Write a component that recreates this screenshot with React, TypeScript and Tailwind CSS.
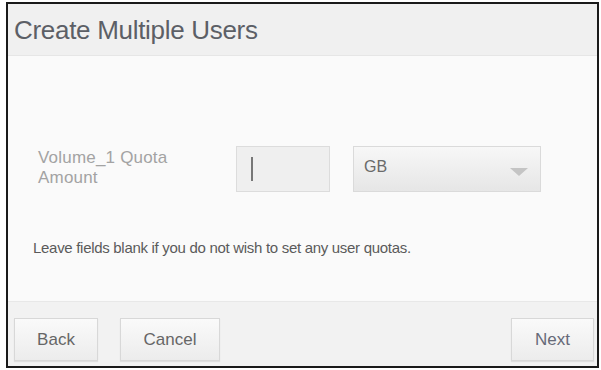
import React from "react";

export default function App() {
  const font = { fontFamily: '"Liberation Sans", Arial, sans-serif' };
  return (
    <div className="w-[601px] h-[370px] bg-white pt-[2px] pl-[6px]" style={font}>
      <div className="w-[593px] h-[366px] border-2 border-[#1a1a1a] flex flex-col bg-[#f2f2f2]">
        <div className="h-[52px] flex items-center pl-[6px] bg-[#f0f0f0] border-b border-[#e6e6e6]">
          <span className="text-[26px] text-[#5c5f66] tracking-[-0.3px] mt-[2px]">Create Multiple Users</span>
        </div>
        <div className="h-[246px] bg-[#fafafa] border-b border-[#e8e8e8] pt-[90px] pl-[30px] flex flex-col">
          <div className="flex items-center h-[46px]">
            <div className="w-[198px] text-[17px] leading-[20px] text-[#a3a3a3] -mt-[3px] tracking-[0.2px]">
              Volume_1 Quota<br />Amount
            </div>
            <div className="w-[94px] h-[46px] bg-[#efefef] border border-[#dcdcdc] flex items-center pl-[14px]">
              <div className="w-[2px] h-[24px] bg-[#777]" />
            </div>
            <div className="ml-[23px] w-[188px] h-[46px] border border-[#dadada] bg-gradient-to-b from-[#f7f7f7] to-[#e6e6e6] flex items-center justify-between pl-[10px] pr-[11px]">
              <span className="text-[16px] text-[#6a6a6a] -mt-[4px]">GB</span>
              <svg width="20" height="10" viewBox="0 0 20 10" className="mt-[6px]">
                <polygon points="1,1 19,1 10,9" fill="#c4c4c4" />
              </svg>
            </div>
          </div>
          <div className="mt-[45px] -ml-[5px] text-[15px] text-[#5a5a5a] tracking-[-0.3px]">
            Leave fields blank if you do not wish to set any user quotas.
          </div>
        </div>
        <div className="flex-1 flex items-start justify-between pl-[6px] pr-[3px] pt-[16px]">
          <div className="flex gap-[22px]">
            <button className="w-[84px] h-[43px] border border-[#d8d8d8] bg-gradient-to-b from-[#fafafa] to-[#ececec] text-[17px] text-[#666] shadow-[0_1px_1px_rgba(0,0,0,0.08)]">
              Back
            </button>
            <button className="w-[100px] h-[43px] border border-[#d8d8d8] bg-gradient-to-b from-[#fafafa] to-[#ececec] text-[17px] text-[#666] shadow-[0_1px_1px_rgba(0,0,0,0.08)]">
              Cancel
            </button>
          </div>
          <button className="w-[83px] h-[43px] border border-[#d8d8d8] bg-gradient-to-b from-[#fafafa] to-[#ececec] text-[17px] text-[#666a78] shadow-[0_1px_1px_rgba(0,0,0,0.08)]">
            Next
          </button>
        </div>
      </div>
    </div>
  );
}
